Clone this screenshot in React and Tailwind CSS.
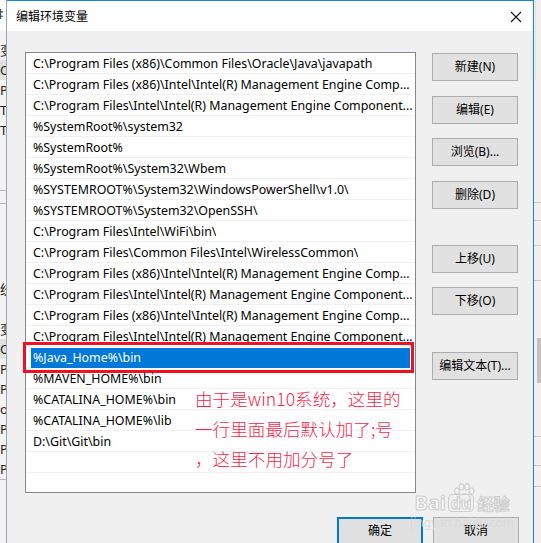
import React from 'react';

const paths = [
  'C:\\Program Files (x86)\\Common Files\\Oracle\\Java\\javapath',
  'C:\\Program Files (x86)\\Intel\\Intel(R) Management Engine Comp...',
  'C:\\Program Files\\Intel\\Intel(R) Management Engine Component...',
  '%SystemRoot%\\system32',
  '%SystemRoot%',
  '%SystemRoot%\\System32\\Wbem',
  '%SYSTEMROOT%\\System32\\WindowsPowerShell\\v1.0\\',
  '%SYSTEMROOT%\\System32\\OpenSSH\\',
  'C:\\Program Files\\Intel\\WiFi\\bin\\',
  'C:\\Program Files\\Common Files\\Intel\\WirelessCommon\\',
  'C:\\Program Files (x86)\\Intel\\Intel(R) Management Engine Comp...',
  'C:\\Program Files\\Intel\\Intel(R) Management Engine Component...',
  'C:\\Program Files (x86)\\Intel\\Intel(R) Management Engine Comp...',
  'C:\\Program Files\\Intel\\Intel(R) Management Engine Component...',
  '%Java_Home%\\bin',
  '%MAVEN_HOME%\\bin',
  '%CATALINA_HOME%\\bin',
  '%CATALINA_HOME%\\lib',
  'D:\\Git\\Git\\bin',
  '',
];

const SELECTED = 14;

const bgTop = ['‡', '', '变', 'O', 'Pa', 'TE', 'TN'];
const bgBottom = ['统', '', '变', 'O', 'Pa', 'PA', 'ol', 'PF', 'PF', 'PF'];

function Btn({ children, className = '' }) {
  return (
    <button className={`h-[28px] w-[86px] border border-[#adadad] bg-[#e1e1e1] text-[12px] text-black ${className}`}>
      {children}
    </button>
  );
}

export default function App() {
  const ui = { fontFamily: '"Noto Sans", "Noto Sans CJK SC", sans-serif' };
  return (
    <div className="flex h-[543px] w-[541px] overflow-hidden bg-[#f0f0f0]" style={ui}>
      {/* background window, left */}
      <div className="w-[7px] shrink-0 overflow-hidden border-r border-[#9aa4b0] bg-[#f3f3f3] text-[13px] leading-[20px] text-[#222]">
        <div className="h-[30px] whitespace-nowrap bg-white pt-[4px] -ml-[3px]">{bgTop[0]}</div>
        <div className="h-[10px]" />
        {bgTop.slice(2).map((t, i) => (
          <div key={i} className={`h-[20px] whitespace-nowrap ${t === 'O' ? 'bg-[#e0e0e0]' : ''}`}>{t}</div>
        ))}
        <div className="h-[50px]" />
        <div className="h-[14px] border-y border-[#b8b8b8]" />
        <div className="h-[75px]" />
        {bgBottom.map((t, i) => (
          <div key={i} className={`h-[20px] whitespace-nowrap ${t === 'O' ? 'bg-[#e0e0e0]' : ''} ${i === 1 ? 'h-[7px]' : ''}`}>{t}</div>
        ))}
        <div className="border-t border-[#b8b8b8]" />
      </div>

      {/* dialog */}
      <div className="flex w-[527px] shrink-0 flex-col border-t border-r border-[#1883d7] bg-[#f0f0f0]">
        <div className="flex h-[30px] shrink-0 items-center justify-between bg-white pl-[9px] pr-[11px]">
          <span className="text-[12px] text-black" style={{ fontFamily: '"Noto Sans CJK SC", sans-serif' }}>编辑环境变量</span>
          <svg width="12" height="12" viewBox="0 0 12 12" className="mt-[1px]">
            <path d="M1 1 L11 11 M11 1 L1 11" stroke="#111" strokeWidth="1.1" fill="none" />
          </svg>
        </div>

        <div className="flex flex-1 flex-col pl-[18px] pr-[14px] pt-[21px]">
          <div className="flex">
            {/* list */}
            <div className="relative h-[441px] w-[391px] shrink-0 border border-[#828790] bg-white">
              {paths.map((p, i) => (
                <div key={i} className="flex h-[21px] items-center border-b border-[#f0f0f0] pt-[2px] text-[12.4px]">
                  {i === SELECTED ? (
                    <div className="ml-[5px] flex h-[20px] w-[379px] items-center bg-[#0078d7] pl-[2px] text-white">{p}</div>
                  ) : (
                    <div className="overflow-hidden whitespace-nowrap pl-[7px] text-black">{p}</div>
                  )}
                </div>
              ))}

              {/* red annotation box */}
              <div className="absolute left-[-3px] top-[289px] h-[31px] w-[391px] border-[3px] border-[#ee1122]" />

              {/* annotation text */}
              <div
                className="absolute left-[169px] top-[331px] text-[17.6px] leading-[30px] text-[#f2274a]"
                style={{ fontFamily: '"Noto Sans CJK SC", serif', fontWeight: 300 }}
              >
                <div>由于是win10系统，这里的</div>
                <div>一行里面最后默认加了;号</div>
                <div>，这里不用加分号了</div>
              </div>
            </div>

            {/* side buttons */}
            <div className="ml-[16px] flex flex-col pt-[1px]">
              <Btn>新建(N)</Btn>
              <Btn className="mt-[15px]">编辑(E)</Btn>
              <Btn className="mt-[14px]">浏览(B)...</Btn>
              <Btn className="mt-[15px]">删除(D)</Btn>
              <Btn className="mt-[36px]">上移(U)</Btn>
              <Btn className="mt-[14px]">下移(O)</Btn>
              <Btn className="mt-[37px]">编辑文本(T)...</Btn>
            </div>
          </div>

          <div className="relative mt-[24px] flex justify-end gap-[10px]">
            <button className="h-[28px] w-[86px] border-2 border-[#0078d7] bg-[#e1e1e1] text-[12px] text-black">确定</button>
            <Btn>取消</Btn>

            {/* baidu watermark */}
            <div className="pointer-events-none absolute right-[7px] top-[-34px] flex w-[100px] flex-col items-center">
              <svg width="24" height="20" viewBox="0 0 24 20" className="ml-[4px]">
                <g fill="none" stroke="#d0d0d0" strokeWidth="1.2">
                  <ellipse cx="5" cy="8" rx="2.4" ry="3.2" />
                  <ellipse cx="9.5" cy="3.8" rx="2.4" ry="3.2" />
                  <ellipse cx="15" cy="3.8" rx="2.4" ry="3.2" />
                  <ellipse cx="19.5" cy="8" rx="2.4" ry="3.2" />
                  <path d="M6 17 C6 12, 10 10.5, 12.2 10.5 C14.4 10.5, 18.5 12, 18.5 17 C18.5 20, 6 20, 6 17 Z" />
                </g>
              </svg>
              <div className="-mt-[9px] flex h-[18px] items-center font-bold leading-[18px] text-white/70 [-webkit-text-stroke:1px_#cdcdcd]">
                <span className="text-[20px]">Bai</span>
                <span className="ml-[2px] rounded-[4px] border border-[#cfcfcf] px-[2px] text-[16px] leading-[16px]">du</span>
                <span className="ml-[3px] text-[16px]" style={{ fontFamily: '"Noto Sans CJK SC", sans-serif' }}>经验</span>
              </div>
              <div className="mt-[5px] text-[12px] leading-[12px] text-[#d8d8d8]/80">jingyan.baidu.com</div>
            </div>
          </div>
        </div>
      </div>

      {/* background window, right */}
      <div className="relative w-[7px] shrink-0 overflow-hidden bg-[#f0f0f0]">
        <div className="ml-[1px] h-[80px] w-[1px] bg-[#e4e4e4]" />
        <div className="h-[122px]" />
        <div className="border-t border-[#c8c8c8]" />
        <div className="h-[17px]" />
        <div className="border-t border-[#c8c8c8]" />
        <div className="h-[24px]" />
        <div className="border-t border-[#d0d0d0]" />
        <div className="h-[34px]" />
        <div className="border-t border-[#c8c8c8]" />
        <div className="ml-[3px] mt-[57px] h-[45px] w-[4px] bg-[#c2c2c2]" />
        <div className="h-[53px]" />
        <div className="border-t border-[#c8c8c8]" />
        <div className="h-[28px]" />
        <div className="border-t border-[#c8c8c8]" />
        <div className="h-[20px]" />
        <div className="border-t border-[#c8c8c8]" />
      </div>
    </div>
  );
}
